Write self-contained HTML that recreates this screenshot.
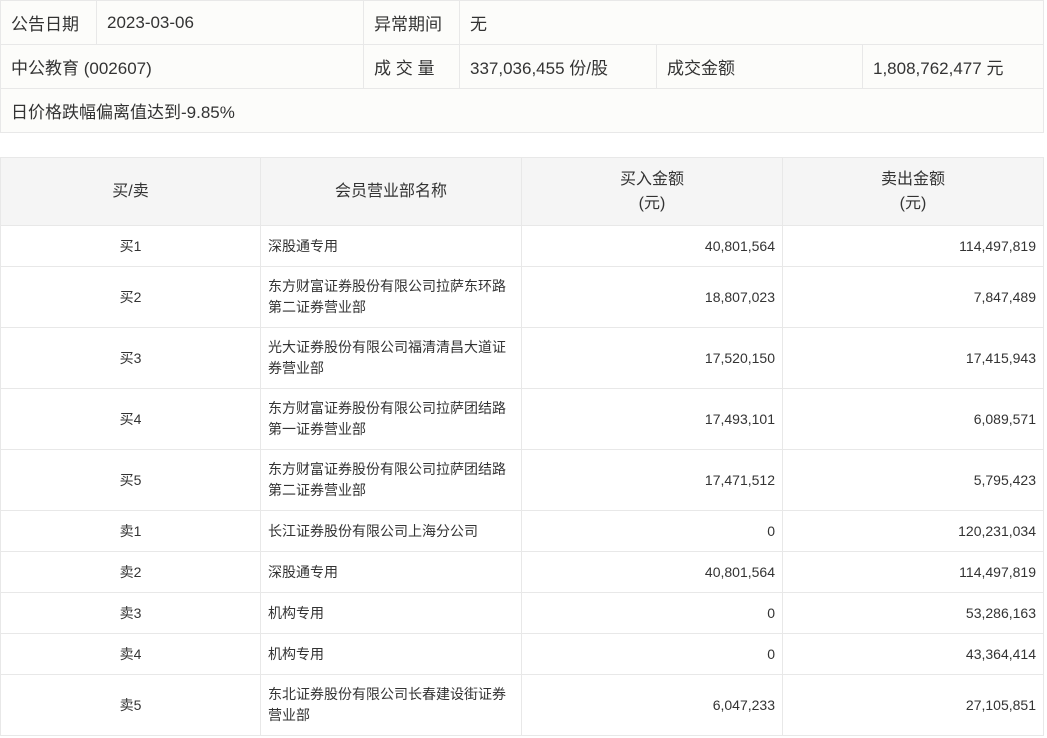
<!DOCTYPE html>
<html><head><meta charset="utf-8"><style>
*{margin:0;padding:0;box-sizing:border-box}
body{width:1047px;height:738px;background:#fff;font-family:"Liberation Sans","Noto Sans CJK SC",sans-serif;color:#333;overflow:hidden}
table{border-collapse:collapse;table-layout:fixed;position:absolute;left:0}
td,th{border:1px solid #e8e8e8;font-weight:normal;vertical-align:middle}
#t1{top:0;width:1043px;background:#fcfcfa;font-size:17px}
#t1 td{height:44px;padding:0 10px}
#t2{top:157px;width:1043px;font-size:14px}
#t2 th{background:#f5f5f5;height:68px;font-size:16px;line-height:24px;text-align:center}
#t2 td{line-height:21px}
#t2 td.c{text-align:center}
#t2 td.n{padding-left:7px;padding-right:6px}
#t2 td.r{text-align:right;padding-right:7px}
.h1{height:41px}.h2{height:61px}
</style></head><body>
<table id="t1">
<colgroup><col style="width:96px"><col style="width:267px"><col style="width:96px"><col style="width:197px"><col style="width:206px"><col style="width:181px"></colgroup>
<tr><td>公告日期</td><td>2023-03-06</td><td>异常期间</td><td colspan="3">无</td></tr>
<tr><td colspan="2">中公教育 (002607)</td><td>成 交 量</td><td>337,036,455 份/股</td><td>成交金额</td><td>1,808,762,477 元</td></tr>
<tr><td colspan="6">日价格跌幅偏离值达到-9.85%</td></tr>
</table>
<table id="t2">
<colgroup><col style="width:260px"><col style="width:261px"><col style="width:261px"><col style="width:261px"></colgroup>
<tr><th>买/卖</th><th>会员营业部名称</th><th>买入金额<br>(元)</th><th>卖出金额<br>(元)</th></tr>
<tr class="h1"><td class="c">买1</td><td class="n">深股通专用</td><td class="r">40,801,564</td><td class="r">114,497,819</td></tr>
<tr class="h2"><td class="c">买2</td><td class="n">东方财富证券股份有限公司拉萨东环路第二证券营业部</td><td class="r">18,807,023</td><td class="r">7,847,489</td></tr>
<tr class="h2"><td class="c">买3</td><td class="n">光大证券股份有限公司福清清昌大道证券营业部</td><td class="r">17,520,150</td><td class="r">17,415,943</td></tr>
<tr class="h2"><td class="c">买4</td><td class="n">东方财富证券股份有限公司拉萨团结路第一证券营业部</td><td class="r">17,493,101</td><td class="r">6,089,571</td></tr>
<tr class="h2"><td class="c">买5</td><td class="n">东方财富证券股份有限公司拉萨团结路第二证券营业部</td><td class="r">17,471,512</td><td class="r">5,795,423</td></tr>
<tr class="h1"><td class="c">卖1</td><td class="n">长江证券股份有限公司上海分公司</td><td class="r">0</td><td class="r">120,231,034</td></tr>
<tr class="h1"><td class="c">卖2</td><td class="n">深股通专用</td><td class="r">40,801,564</td><td class="r">114,497,819</td></tr>
<tr class="h1"><td class="c">卖3</td><td class="n">机构专用</td><td class="r">0</td><td class="r">53,286,163</td></tr>
<tr class="h1"><td class="c">卖4</td><td class="n">机构专用</td><td class="r">0</td><td class="r">43,364,414</td></tr>
<tr class="h2"><td class="c">卖5</td><td class="n">东北证券股份有限公司长春建设街证券营业部</td><td class="r">6,047,233</td><td class="r">27,105,851</td></tr>
</table>
</body></html>
